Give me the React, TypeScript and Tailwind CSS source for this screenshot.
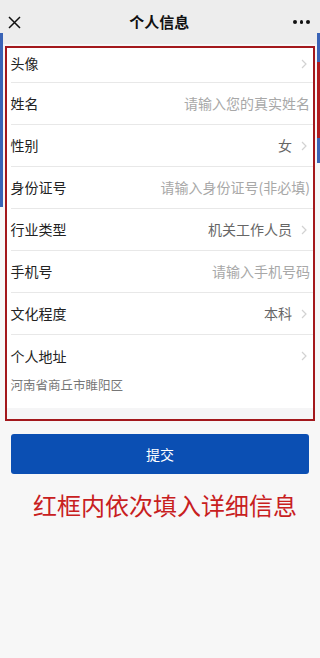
import React from "react";

const font = { fontFamily: '"Noto Sans CJK SC", "Noto Sans", sans-serif' };

function Chevron() {
  return (
    <svg width="6" height="10" viewBox="0 0 6 10" className="ml-[9px] mr-[6px] shrink-0">
      <path d="M1 1 L5 5 L1 9" fill="none" stroke="#d2d2d2" strokeWidth="1.2" />
    </svg>
  );
}

interface RowProps {
  label: string;
  value?: string;
  placeholder?: boolean;
  arrow?: boolean;
  className?: string;
}

function Row({ label, value, placeholder, arrow, className }: RowProps) {
  return (
    <div className={`ml-[3.5px] flex items-center justify-between border-b border-[#e8e8e8] ${className ?? "h-[42px]"}`}>
      <span className="text-[14px] text-[#222]">{label}</span>
      <div className="flex items-center">
        {value && (
          <span className={`text-[14px] ${placeholder ? "text-[#a8a8a8] mr-[3px]" : "text-[#666]"}`}>{value}</span>
        )}
        {arrow && <Chevron />}
      </div>
    </div>
  );
}

export default function App() {
  return (
    <div className="relative w-[320px] h-[658px] overflow-hidden bg-[#f7f7f7]" style={font}>
      {/* bleed-through strips at the edges */}
      <div className="absolute left-0 top-[33px] w-[3px] h-[174px] bg-[#3a63b6]" />
      <div className="absolute right-0 top-[33px] w-[3px] h-[29px] bg-[#3a63b6]" />
      <div className="absolute right-0 top-[62px] w-[3px] h-[76px] bg-[#b01c20]" />
      <div className="absolute right-0 top-[138px] w-[3px] h-[25px] bg-[#3a63b6]" />

      {/* header */}
      <div className="h-[44px] bg-[#ededed] flex items-center justify-between px-[8px]">
        <svg width="13" height="13" viewBox="0 0 13 13">
          <path d="M1 1 L12 12 M12 1 L1 12" stroke="#111" strokeWidth="1.5" />
        </svg>
        <span className="text-[15px] font-bold text-[#111] ml-[4px]">个人信息</span>
        <div className="flex items-center gap-[3px] mr-[2px]">
          <span className="w-[3.5px] h-[3.5px] rounded-full bg-[#111]" />
          <span className="w-[3.5px] h-[3.5px] rounded-full bg-[#111]" />
          <span className="w-[3.5px] h-[3.5px] rounded-full bg-[#111]" />
        </div>
      </div>

      {/* red frame with form */}
      <div className="mx-[5px] mt-[2px] border-[2.5px] border-[#a3181c] bg-white">
        <Row label="头像" arrow className="h-[35px] pb-[3px]" />
        <Row label="姓名" value="请输入您的真实姓名" placeholder />
        <Row label="性别" value="女" arrow />
        <Row label="身份证号" value="请输入身份证号(非必填)" placeholder />
        <Row label="行业类型" value="机关工作人员" arrow />
        <Row label="手机号" value="请输入手机号码" placeholder />
        <Row label="文化程度" value="本科" arrow />
        <div className="ml-[3.5px]">
          <div className="h-[42px] flex items-center justify-between">
            <span className="text-[14px] text-[#222]">个人地址</span>
            <Chevron />
          </div>
          <div className="text-[12.5px] leading-[16px] text-[#777] pb-[15px]">河南省商丘市睢阳区</div>
        </div>
        <div className="h-[11px] bg-[#f5f5f6]" />
      </div>

      {/* submit */}
      <div className="mx-[11px] mt-[13px] h-[40px] rounded-[3px] bg-[#0b4fb3] flex items-center justify-center">
        <span className="text-[14px] text-white">提交</span>
      </div>

      <div className="mt-[16px] pl-[33px] text-[24px] leading-[30px] text-[#c8201e]">红框内依次填入详细信息</div>
    </div>
  );
}
